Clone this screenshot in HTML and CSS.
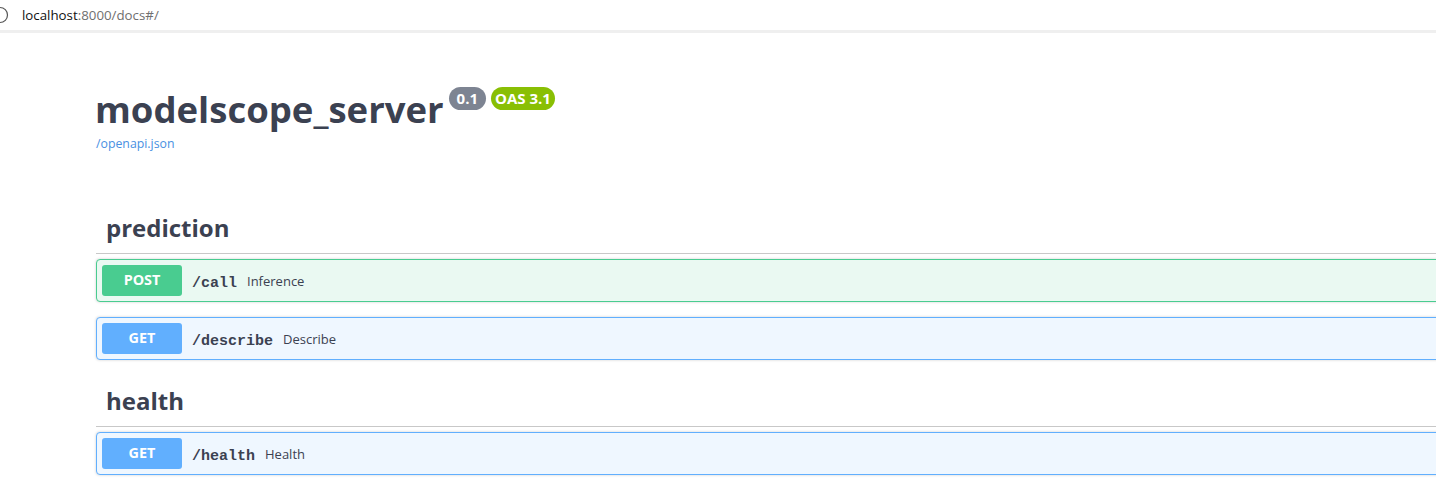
FILE: index.html
```html
<!DOCTYPE html>
<html lang="en">
<head>
  <meta charset="UTF-8" />
  <title>modelscope_server - Swagger UI</title>
  <link rel="stylesheet" href="styles.css">
</head>
<body>
  <div class="address-bar">
    <svg class="reload" width="10" height="20" viewBox="0 0 10 20"><circle cx="0" cy="10" r="7.5" fill="none" stroke="#555" stroke-width="1.2"/></svg>
    <span class="url"><span class="host">localhost</span>:8000/docs#/</span>
  </div>

  <div class="wrapper">
    <div class="info">
      <div class="title-row">
        <h1>modelscope_server</h1>
        <div class="badges">
          <span class="badge version">0.1</span>
          <span class="badge oas">OAS 3.1</span>
        </div>
      </div>
      <a class="spec-link" href="#">/openapi.json</a>
    </div>

    <section class="tag-section first">
      <h3 class="tag-title">prediction</h3>
      <div class="opblock post">
        <span class="method">POST</span>
        <span class="path">/call</span>
        <span class="summary">Inference</span>
      </div>
      <div class="opblock get">
        <span class="method">GET</span>
        <span class="path">/describe</span>
        <span class="summary">Describe</span>
      </div>
    </section>

    <section class="tag-section">
      <h3 class="tag-title">health</h3>
      <div class="opblock get">
        <span class="method">GET</span>
        <span class="path">/health</span>
        <span class="summary">Health</span>
      </div>
    </section>
  </div>
</body>
</html>
```

FILE: styles.css
```css
:root {
  --text: #3b4151;
  --post: #49cc90;
  --get: #61affe;
}

html, body {
  height: 504px;
  overflow: hidden;
}

body {
  margin: 0;
  background: #fff;
  font-family: "Open Sans", sans-serif;
  color: var(--text);
}

.address-bar {
  height: 30px;
  display: flex;
  align-items: center;
  gap: 12px;
  border-bottom: 3px solid #efefef;
  box-sizing: content-box;
}

.reload {
  flex: none;
}

.url {
  font-size: 13.3px;
  color: #6f6f6f;
}

.host {
  color: #111;
}

.wrapper {
  margin-left: 96px;
  margin-right: -12px;
}

.info {
  padding-top: 52px;
}

.title-row {
  display: flex;
  align-items: flex-start;
  height: 48px;
}

h1 {
  margin: 0 0 0 -1px;
  font-size: 36.5px;
  font-weight: 700;
  line-height: 48px;
}

.badges {
  display: flex;
  gap: 5px;
  margin: 2px 0 0 5px;
}

.badge {
  height: 23px;
  line-height: 23px;
  padding: 0 4px;
  border-radius: 12px;
  color: #fff;
  font-size: 15px;
  font-weight: 700;
}

.version {
  background: #7d8492;
  padding: 0 8px;
}

.oas {
  background: #89bf04;
}

.spec-link {
  display: block;
  margin-top: 3px;
  font-size: 12.3px;
  line-height: 16px;
  color: #4990e2;
  text-decoration: none;
}

.tag-section.first {
  margin-top: 58px;
}

.tag-section {
  margin-top: 23px;
}

.tag-title {
  margin: 0;
  padding: 0 10px;
  height: 43px;
  font-size: 24px;
  font-weight: 700;
  line-height: 36px;
  border-bottom: 1px solid #c8c8c8;
}

.opblock {
  display: flex;
  align-items: center;
  height: 41px;
  margin-top: 5px;
  padding: 0 5px;
  border: 1px solid;
  border-radius: 4px;
  box-shadow: 0 0 3px rgba(0, 0, 0, 0.19);
}

.opblock + .opblock {
  margin-top: 15px;
}

.post {
  background: #eaf9f2;
  border-color: var(--post);
}

.get {
  background: #eff7ff;
  border-color: var(--get);
}

.method {
  width: 80px;
  height: 31px;
  line-height: 30px;
  text-align: center;
  border-radius: 3px;
  color: #fff;
  font-size: 14.4px;
  font-weight: 700;
}

.post .method {
  background: var(--post);
}

.get .method {
  background: var(--get);
}

.path {
  margin-left: 10px;
  padding-top: 5px;
  font-family: "Liberation Mono", monospace;
  font-size: 15px;
  font-weight: 700;
}

.summary {
  margin-left: 10px;
  font-size: 13px;
}
```
